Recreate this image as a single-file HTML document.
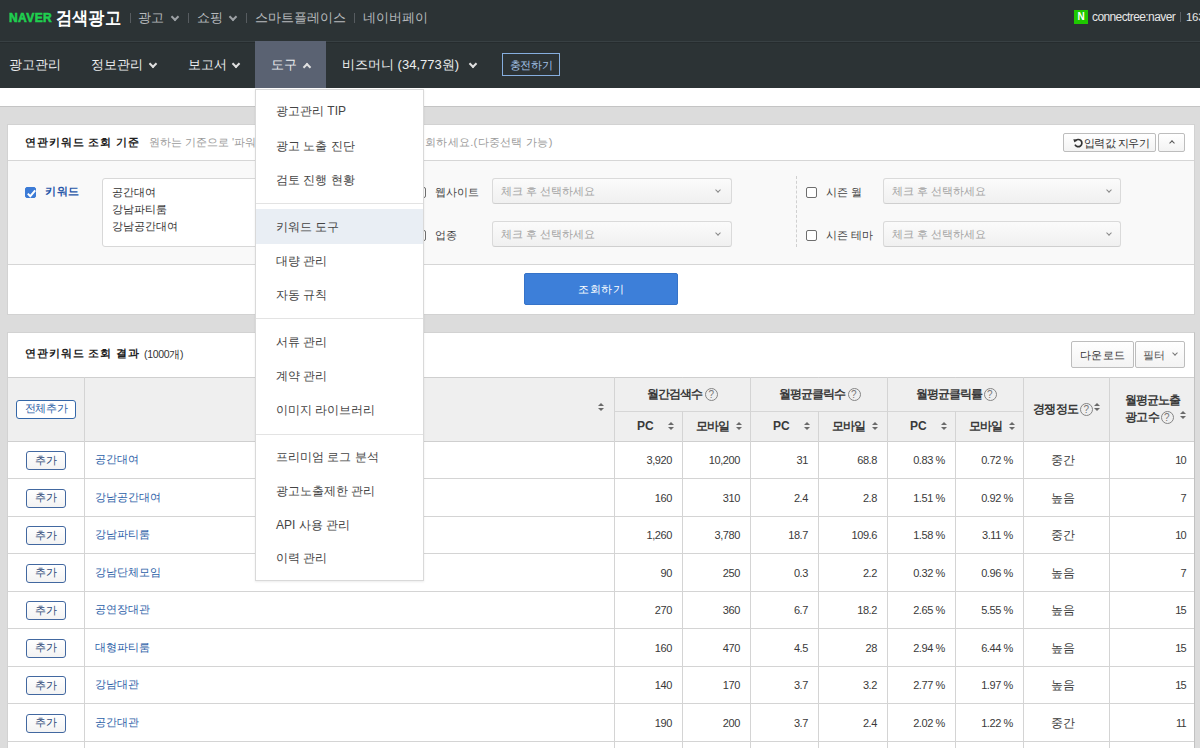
<!DOCTYPE html><html><head><meta charset="utf-8"><title>연관키워드 조회</title><style>
*{box-sizing:border-box;margin:0;padding:0}
html,body{width:1200px;height:748px;overflow:hidden;background:#fff;font-family:"Liberation Sans",sans-serif;color:#333}
div,span{position:absolute;white-space:nowrap}
.bx{position:absolute}
.chev{width:6px;height:6px;border-right:2px solid currentColor;border-bottom:2px solid currentColor;transform:rotate(45deg)}
.chevu{width:6px;height:6px;border-left:2px solid currentColor;border-top:2px solid currentColor;transform:rotate(45deg)}
.schev{width:4px;height:4px;border-right:1px solid #888;border-bottom:1px solid #888;transform:rotate(45deg)}
.t{line-height:16px;height:16px}
.sel{height:26px;border:1px solid #dadada;border-bottom-color:#cfcfcf;border-radius:3px;background:linear-gradient(#fbfbfb,#f0f0f0);}
.sel span{left:8px;top:4px;font-size:11px;color:#a3a3a3;line-height:16px;letter-spacing:0px}
.sel .schev{left:223px;top:9px}
.cb{width:11px;height:11px;border:1px solid #6e6e6e;border-radius:2px;background:#fff}
.lbl{font-size:11px;color:#444;line-height:16px;letter-spacing:0px}
.vl{width:1px;background:#d4d4d4}
.hl{height:1px;background:#d4d4d4}
.q{width:13px;height:13px;border:1.2px solid #858585;border-radius:50%;}
.q:after{content:"?";position:absolute;left:0;top:-0.5px;width:10.6px;text-align:center;font-size:10px;line-height:12px;color:#777;font-weight:normal}
.srt{width:6px;height:9px}
.srt:before{content:"";position:absolute;left:0;top:0;border-left:3px solid transparent;border-right:3px solid transparent;border-bottom:3.5px solid #6a6a6a}
.srt:after{content:"";position:absolute;left:0;top:5px;border-left:3px solid transparent;border-right:3px solid transparent;border-top:3.5px solid #6a6a6a}
.hd{font-size:12px;font-weight:bold;color:#3a3a3a;line-height:16px}
.num{font-size:11px;color:#3a3a3a;line-height:16px;text-align:right;letter-spacing:-0.4px}
.add{width:40px;height:19px;border:1px solid #4268a0;border-radius:3px;background:linear-gradient(#fff,#f3f3f3)}
.add span{left:0;width:38px;top:0px;text-align:center;font-size:11px;line-height:16px;color:#2f4a78;letter-spacing:0px}
.kw{font-size:11px;color:#2d61a8;line-height:16px;letter-spacing:0px}
.mi{left:20px;font-size:12px;color:#444;line-height:16px}
.btn{height:19px;border:1px solid #bdbdbd;border-radius:2px;background:linear-gradient(#fff,#f3f3f3)}
</style></head><body>
<div style="left:0;top:0;width:1200px;height:42px;background:#2c3335;border-bottom:1px solid #384043"></div><div style="left:0;top:42px;width:1200px;height:1px;background:#262c2e"></div>
<span style="left:9px;top:10px;font-size:12px;font-weight:bold;color:#1fcf4f;line-height:16px;letter-spacing:0.4px;-webkit-text-stroke:0.6px #1fcf4f">NAVER</span>
<span style="left:56px;top:7px;font-size:18px;font-weight:bold;color:#fff;line-height:22px;letter-spacing:0px;transform:scaleX(0.9);transform-origin:left center">검색광고</span>
<div style="left:130px;top:13px;width:1px;height:10px;background:#575c60"></div>
<div style="left:188px;top:13px;width:1px;height:10px;background:#575c60"></div>
<div style="left:246px;top:13px;width:1px;height:10px;background:#575c60"></div>
<div style="left:354px;top:13px;width:1px;height:10px;background:#575c60"></div>
<span style="left:138px;font-size:13px;color:#b7babd;line-height:16px;top:10px">광고</span><div class="chev" style="left:172px;top:14px;color:#9da1a5"></div>
<span style="left:197px;font-size:13px;color:#b7babd;line-height:16px;top:10px">쇼핑</span><div class="chev" style="left:230px;top:14px;color:#9da1a5"></div>
<span style="left:255px;font-size:13px;color:#b7babd;line-height:16px;top:10px">스마트플레이스</span>
<span style="left:363px;font-size:13px;color:#b7babd;line-height:16px;top:10px">네이버페이</span>
<div style="left:1074px;top:10px;width:14px;height:14px;background:#1ec800"><span style="left:0;top:0;width:14px;text-align:center;font-size:10px;font-weight:bold;color:#fff;line-height:14px">N</span></div>
<span style="left:1092px;top:9px;font-size:12px;color:#e6e6e6;line-height:16px;letter-spacing:-0.6px">connectree:naver</span>
<div style="left:1180px;top:12px;width:1px;height:10px;background:#5a5f64"></div>
<span style="left:1186px;top:9px;font-size:11.5px;color:#e6e6e6;line-height:16px;letter-spacing:-0.3px">163</span>
<div style="left:0;top:43px;width:1200px;height:45px;background:#2c3335"></div>
<div style="left:255px;top:41px;width:71px;height:47px;background:#5a6272"></div>
<span style="left:9px;font-size:13px;color:#eceeef;line-height:16px;top:57px;letter-spacing:0px">광고관리</span>
<span style="left:91px;font-size:13px;color:#eceeef;line-height:16px;top:57px;letter-spacing:0px">정보관리</span><div class="chev" style="left:150px;top:61px;color:#e0e0e0"></div>
<span style="left:188px;font-size:13px;color:#eceeef;line-height:16px;top:57px;letter-spacing:0px">보고서</span><div class="chev" style="left:233px;top:61px;color:#e0e0e0"></div>
<span style="left:271px;font-size:13px;color:#eceeef;line-height:16px;top:57px;letter-spacing:0px">도구</span><div class="chevu" style="left:304px;top:64px;color:#e0e0e0"></div>
<span style="left:342px;font-size:13px;color:#eceeef;line-height:16px;top:57px;letter-spacing:0px">비즈머니 (34,773원)</span><div class="chev" style="left:470px;top:61px;color:#e0e0e0"></div>
<div style="left:502px;top:53px;width:58px;height:23px;border:1px solid #86aede"><span style="left:0;top:3px;width:56px;text-align:center;font-size:10.5px;color:#a3c2e8;line-height:16px;letter-spacing:-0.4px">충전하기</span></div>
<div style="left:0;top:88px;width:1200px;height:19px;background:#fff;border-bottom:1px solid #c4c4c4"></div>
<div style="left:0;top:107px;width:1200px;height:641px;background:#dcdcdc"></div>
<div style="left:7px;top:124px;width:1188px;height:191px;background:#fff;border:1px solid #d2d2d2"></div>
<div style="left:8px;top:160px;width:1186px;height:105px;background:#f9f9f9;border-top:1px solid #d6d6d6;border-bottom:1px solid #d6d6d6"></div>
<span class="hd" style="left:25px;top:134px;font-size:11px;letter-spacing:0.9px;color:#222">연관키워드 조회 기준</span>
<div style="left:149px;top:128px;width:106px;height:28px;overflow:hidden"><span style="left:0;top:6px;font-size:11px;color:#9b9b9b;line-height:16px;letter-spacing:0px">원하는 기준으로 '파워링크 캠페인'의 키워드를 선택하고, 조</span></div>
<span style="left:425px;top:134px;font-size:11px;color:#9b9b9b;line-height:16px;letter-spacing:0.3px">회하세요.(다중선택 가능)</span>
<div class="btn" style="left:1063px;top:133px;width:93px;"><svg style="position:absolute;left:9px;top:3.5px" width="10" height="10" viewBox="0 0 10 10"><path d="M2.2 3.2 A3.6 3.6 0 1 1 2.0 6.6" fill="none" stroke="#333" stroke-width="1.7"/><path d="M0.3 1.2 L4.3 1.6 L1.4 4.6 Z" fill="#333"/></svg><span style="left:19.5px;top:1px;font-size:11px;color:#333;line-height:16px;letter-spacing:-0.5px">입력값 지우기</span></div>
<div class="btn" style="left:1158px;top:133px;width:27px;"><div class="chevu" style="left:11px;top:7px;width:4px;height:4px;border-width:1px;color:#555"></div></div>
<div class="cb" style="left:25px;top:187px;width:11px;height:11px;background:#3c7bd6;border-color:#3c7bd6"><svg style="position:absolute;left:0;top:0" width="11" height="11" viewBox="0 0 11 11"><path d="M1.8 5.6 L4.3 8.2 L9.2 2.4" fill="none" stroke="#fff" stroke-width="2"/></svg></div>
<span style="left:45px;top:183px;font-size:11px;font-weight:bold;color:#2857a8;line-height:16px;letter-spacing:0.7px">키워드</span>
<div style="left:102px;top:178px;width:300px;height:69px;background:#fff;border:1px solid #d8d8d8;border-radius:3px"></div>
<span style="left:112px;top:184px;font-size:11px;color:#333;line-height:16px;letter-spacing:0px">공간대여</span>
<span style="left:112px;top:201px;font-size:11px;color:#333;line-height:16px;letter-spacing:0px">강남파티룸</span>
<span style="left:112px;top:218px;font-size:11px;color:#333;line-height:16px;letter-spacing:0px">강남공간대여</span>
<div class="cb" style="left:415px;top:187px"></div><span class="lbl" style="left:435px;top:184px">웹사이트</span>
<div class="sel" style="left:492px;top:178px;width:240px"><span>체크 후 선택하세요</span><div class="schev"></div></div>
<div class="cb" style="left:415px;top:230px"></div><span class="lbl" style="left:435px;top:227px">업종</span>
<div class="sel" style="left:492px;top:221px;width:240px"><span>체크 후 선택하세요</span><div class="schev"></div></div>
<div style="left:796px;top:176px;width:0;height:71px;border-left:1px dashed #d0d0d0"></div>
<div class="cb" style="left:806px;top:187px"></div><span class="lbl" style="left:826px;top:184px">시즌 월</span>
<div class="sel" style="left:883px;top:178px;width:238px"><span>체크 후 선택하세요</span><div class="schev" style="left:223px"></div></div>
<div class="cb" style="left:806px;top:230px"></div><span class="lbl" style="left:826px;top:227px">시즌 테마</span>
<div class="sel" style="left:883px;top:221px;width:238px"><span>체크 후 선택하세요</span><div class="schev" style="left:223px"></div></div>
<div style="left:524px;top:273px;width:154px;height:32px;background:#3d7fd9;border-radius:2px;border:1px solid #3673c8"><span style="left:0;top:7px;width:152px;text-align:center;font-size:11px;color:#fff;line-height:16px;letter-spacing:0.5px">조회하기</span></div>
<div style="left:7px;top:332px;width:1188px;height:420px;background:#fff;border:1px solid #d2d2d2;border-right-color:#c2c2c2"></div>
<span class="hd" style="left:25px;top:345px;font-size:11px;letter-spacing:0.9px;color:#222">연관키워드 조회 결과</span>
<span style="left:144px;top:346px;font-size:10.5px;color:#333;line-height:16px;letter-spacing:-0.3px">(1000개)</span>
<div class="btn" style="left:1071px;top:341px;width:63px;height:27px"><span style="left:0;width:61px;text-align:center;top:5px;font-size:11px;color:#333;line-height:16px;letter-spacing:0.5px">다운로드</span></div>
<div class="btn" style="left:1135px;top:341px;width:50px;height:27px"><span style="left:7px;top:5px;font-size:11px;color:#555;line-height:16px;letter-spacing:0px">필터</span><div class="schev" style="left:37px;top:9px;border-color:#777"></div></div>
<div style="left:8px;top:377px;width:1186px;height:65px;background:#efefef"></div>
<div class="hl" style="left:8px;top:377px;width:1186px;background:#cfcfcf"></div>
<div class="hl" style="left:614px;top:411px;width:409px;background:#d6d6d6"></div>
<div class="hl" style="left:8px;top:441px;width:1186px;background:#cfcfcf"></div>
<div class="hl" style="left:8px;top:478px;width:1186px"></div>
<div class="hl" style="left:8px;top:516px;width:1186px"></div>
<div class="hl" style="left:8px;top:553px;width:1186px"></div>
<div class="hl" style="left:8px;top:591px;width:1186px"></div>
<div class="hl" style="left:8px;top:628px;width:1186px"></div>
<div class="hl" style="left:8px;top:666px;width:1186px"></div>
<div class="hl" style="left:8px;top:703px;width:1186px"></div>
<div class="hl" style="left:8px;top:741px;width:1186px"></div>
<div class="vl" style="left:84px;top:377px;height:380px"></div>
<div class="vl" style="left:614px;top:377px;height:380px"></div>
<div class="vl" style="left:682px;top:377px;height:380px"></div>
<div class="vl" style="left:750px;top:377px;height:380px"></div>
<div class="vl" style="left:818px;top:377px;height:380px"></div>
<div class="vl" style="left:887px;top:377px;height:380px"></div>
<div class="vl" style="left:955px;top:377px;height:380px"></div>
<div class="vl" style="left:1023px;top:377px;height:380px"></div>
<div class="vl" style="left:1109px;top:377px;height:380px"></div>
<div style="left:682px;top:378px;width:1px;height:33px;background:#efefef"></div>
<div style="left:818px;top:378px;width:1px;height:33px;background:#efefef"></div>
<div style="left:955px;top:378px;width:1px;height:33px;background:#efefef"></div>
<div class="add" style="left:16px;top:400px;width:60px;border-color:#3467a8;background:#fff"><span style="width:58px;color:#2d62a8;font-size:11px;letter-spacing:-0.3px;top:-1px">전체추가</span></div>
<div class="srt" style="left:598px;top:403px"></div>
<span class="hd" style="left:647px;top:386px;letter-spacing:-0.9px">월간검색수</span><div class="q" style="left:705px;top:388px"></div>
<span class="hd" style="left:779px;top:386px;letter-spacing:-1.1px">월평균클릭수</span><div class="q" style="left:847.5px;top:388px"></div>
<span class="hd" style="left:916px;top:386px;letter-spacing:-1.0px">월평균클릭률</span><div class="q" style="left:983.5px;top:388px"></div>
<span class="hd" style="left:637px;top:418px">PC</span><div class="srt" style="left:668px;top:422px"></div>
<span class="hd" style="left:696px;top:418px;letter-spacing:-1px">모바일</span><div class="srt" style="left:736px;top:422px"></div>
<span class="hd" style="left:773px;top:418px">PC</span><div class="srt" style="left:804px;top:422px"></div>
<span class="hd" style="left:832px;top:418px;letter-spacing:-1px">모바일</span><div class="srt" style="left:872px;top:422px"></div>
<span class="hd" style="left:910px;top:418px">PC</span><div class="srt" style="left:941px;top:422px"></div>
<span class="hd" style="left:969px;top:418px;letter-spacing:-1px">모바일</span><div class="srt" style="left:1009px;top:422px"></div>
<span class="hd" style="left:1033px;top:401px;letter-spacing:-0.6px">경쟁정도</span><div class="q" style="left:1080px;top:403px"></div><div class="srt" style="left:1094px;top:403px"></div>
<span class="hd" style="left:1125px;top:392px;letter-spacing:-1px">월평균노출</span>
<span class="hd" style="left:1125px;top:409px;letter-spacing:-0.7px">광고수</span><div class="q" style="left:1160.5px;top:411px"></div><div class="srt" style="left:1180px;top:411px"></div>
<div class="add" style="left:26px;top:451.0px"><span style="font-size:11px;letter-spacing:-0.3px;top:-0.5px">추가</span></div>
<span class="kw" style="left:95px;top:451.0px">공간대여</span>
<span class="num" style="left:612px;width:60px;top:452.0px">3,920</span>
<span class="num" style="left:680px;width:60px;top:452.0px">10,200</span>
<span class="num" style="left:748px;width:60px;top:452.0px">31</span>
<span class="num" style="left:817px;width:60px;top:452.0px">68.8</span>
<span class="num" style="left:885px;width:60px;top:452.0px">0.83 %</span>
<span class="num" style="left:953px;width:60px;top:452.0px">0.72 %</span>
<span class="num" style="left:1023px;width:80px;text-align:center;top:452.0px;letter-spacing:0px;transform:none;font-size:12px">중간</span>
<span class="num" style="left:1126px;width:60px;top:452.0px;letter-spacing:-0.7px">10</span>
<div class="add" style="left:26px;top:488.5px"><span style="font-size:11px;letter-spacing:-0.3px;top:-0.5px">추가</span></div>
<span class="kw" style="left:95px;top:488.5px">강남공간대여</span>
<span class="num" style="left:612px;width:60px;top:489.5px">160</span>
<span class="num" style="left:680px;width:60px;top:489.5px">310</span>
<span class="num" style="left:748px;width:60px;top:489.5px">2.4</span>
<span class="num" style="left:817px;width:60px;top:489.5px">2.8</span>
<span class="num" style="left:885px;width:60px;top:489.5px">1.51 %</span>
<span class="num" style="left:953px;width:60px;top:489.5px">0.92 %</span>
<span class="num" style="left:1023px;width:80px;text-align:center;top:489.5px;letter-spacing:0px;transform:none;font-size:12px">높음</span>
<span class="num" style="left:1126px;width:60px;top:489.5px;letter-spacing:-0.7px">7</span>
<div class="add" style="left:26px;top:526.0px"><span style="font-size:11px;letter-spacing:-0.3px;top:-0.5px">추가</span></div>
<span class="kw" style="left:95px;top:526.0px">강남파티룸</span>
<span class="num" style="left:612px;width:60px;top:527.0px">1,260</span>
<span class="num" style="left:680px;width:60px;top:527.0px">3,780</span>
<span class="num" style="left:748px;width:60px;top:527.0px">18.7</span>
<span class="num" style="left:817px;width:60px;top:527.0px">109.6</span>
<span class="num" style="left:885px;width:60px;top:527.0px">1.58 %</span>
<span class="num" style="left:953px;width:60px;top:527.0px">3.11 %</span>
<span class="num" style="left:1023px;width:80px;text-align:center;top:527.0px;letter-spacing:0px;transform:none;font-size:12px">중간</span>
<span class="num" style="left:1126px;width:60px;top:527.0px;letter-spacing:-0.7px">10</span>
<div class="add" style="left:26px;top:563.5px"><span style="font-size:11px;letter-spacing:-0.3px;top:-0.5px">추가</span></div>
<span class="kw" style="left:95px;top:563.5px">강남단체모임</span>
<span class="num" style="left:612px;width:60px;top:564.5px">90</span>
<span class="num" style="left:680px;width:60px;top:564.5px">250</span>
<span class="num" style="left:748px;width:60px;top:564.5px">0.3</span>
<span class="num" style="left:817px;width:60px;top:564.5px">2.2</span>
<span class="num" style="left:885px;width:60px;top:564.5px">0.32 %</span>
<span class="num" style="left:953px;width:60px;top:564.5px">0.96 %</span>
<span class="num" style="left:1023px;width:80px;text-align:center;top:564.5px;letter-spacing:0px;transform:none;font-size:12px">높음</span>
<span class="num" style="left:1126px;width:60px;top:564.5px;letter-spacing:-0.7px">7</span>
<div class="add" style="left:26px;top:601.0px"><span style="font-size:11px;letter-spacing:-0.3px;top:-0.5px">추가</span></div>
<span class="kw" style="left:95px;top:601.0px">공연장대관</span>
<span class="num" style="left:612px;width:60px;top:602.0px">270</span>
<span class="num" style="left:680px;width:60px;top:602.0px">360</span>
<span class="num" style="left:748px;width:60px;top:602.0px">6.7</span>
<span class="num" style="left:817px;width:60px;top:602.0px">18.2</span>
<span class="num" style="left:885px;width:60px;top:602.0px">2.65 %</span>
<span class="num" style="left:953px;width:60px;top:602.0px">5.55 %</span>
<span class="num" style="left:1023px;width:80px;text-align:center;top:602.0px;letter-spacing:0px;transform:none;font-size:12px">높음</span>
<span class="num" style="left:1126px;width:60px;top:602.0px;letter-spacing:-0.7px">15</span>
<div class="add" style="left:26px;top:638.5px"><span style="font-size:11px;letter-spacing:-0.3px;top:-0.5px">추가</span></div>
<span class="kw" style="left:95px;top:638.5px">대형파티룸</span>
<span class="num" style="left:612px;width:60px;top:639.5px">160</span>
<span class="num" style="left:680px;width:60px;top:639.5px">470</span>
<span class="num" style="left:748px;width:60px;top:639.5px">4.5</span>
<span class="num" style="left:817px;width:60px;top:639.5px">28</span>
<span class="num" style="left:885px;width:60px;top:639.5px">2.94 %</span>
<span class="num" style="left:953px;width:60px;top:639.5px">6.44 %</span>
<span class="num" style="left:1023px;width:80px;text-align:center;top:639.5px;letter-spacing:0px;transform:none;font-size:12px">높음</span>
<span class="num" style="left:1126px;width:60px;top:639.5px;letter-spacing:-0.7px">15</span>
<div class="add" style="left:26px;top:676.0px"><span style="font-size:11px;letter-spacing:-0.3px;top:-0.5px">추가</span></div>
<span class="kw" style="left:95px;top:676.0px">강남대관</span>
<span class="num" style="left:612px;width:60px;top:677.0px">140</span>
<span class="num" style="left:680px;width:60px;top:677.0px">170</span>
<span class="num" style="left:748px;width:60px;top:677.0px">3.7</span>
<span class="num" style="left:817px;width:60px;top:677.0px">3.2</span>
<span class="num" style="left:885px;width:60px;top:677.0px">2.77 %</span>
<span class="num" style="left:953px;width:60px;top:677.0px">1.97 %</span>
<span class="num" style="left:1023px;width:80px;text-align:center;top:677.0px;letter-spacing:0px;transform:none;font-size:12px">높음</span>
<span class="num" style="left:1126px;width:60px;top:677.0px;letter-spacing:-0.7px">15</span>
<div class="add" style="left:26px;top:713.5px"><span style="font-size:11px;letter-spacing:-0.3px;top:-0.5px">추가</span></div>
<span class="kw" style="left:95px;top:713.5px">공간대관</span>
<span class="num" style="left:612px;width:60px;top:714.5px">190</span>
<span class="num" style="left:680px;width:60px;top:714.5px">200</span>
<span class="num" style="left:748px;width:60px;top:714.5px">3.7</span>
<span class="num" style="left:817px;width:60px;top:714.5px">2.4</span>
<span class="num" style="left:885px;width:60px;top:714.5px">2.02 %</span>
<span class="num" style="left:953px;width:60px;top:714.5px">1.22 %</span>
<span class="num" style="left:1023px;width:80px;text-align:center;top:714.5px;letter-spacing:0px;transform:none;font-size:12px">중간</span>
<span class="num" style="left:1126px;width:60px;top:714.5px;letter-spacing:-0.7px">11</span>
<div style="left:255px;top:89px;width:169px;height:492px;background:#fff;border:1px solid #d9d9d9;box-shadow:0 1px 2px rgba(0,0,0,0.08)"></div>
<div style="left:256px;top:209px;width:167px;height:35px;background:#e9eef4"></div>
<div class="hl" style="left:256px;top:203px;width:167px;background:#e3e3e3"></div>
<div class="hl" style="left:256px;top:318px;width:167px;background:#e3e3e3"></div>
<div class="hl" style="left:256px;top:433.5px;width:167px;background:#e3e3e3"></div>
<span class="mi" style="left:276px;top:103px">광고관리 TIP</span>
<span class="mi" style="left:276px;top:137.5px">광고 노출 진단</span>
<span class="mi" style="left:276px;top:172px">검토 진행 현황</span>
<span class="mi" style="left:276px;top:218.5px">키워드 도구</span>
<span class="mi" style="left:276px;top:252.5px">대량 관리</span>
<span class="mi" style="left:276px;top:286.5px">자동 규칙</span>
<span class="mi" style="left:276px;top:333.5px">서류 관리</span>
<span class="mi" style="left:276px;top:367.5px">계약 관리</span>
<span class="mi" style="left:276px;top:401.5px">이미지 라이브러리</span>
<span class="mi" style="left:276px;top:448.5px">프리미엄 로그 분석</span>
<span class="mi" style="left:276px;top:483px">광고노출제한 관리</span>
<span class="mi" style="left:276px;top:517px">API 사용 관리</span>
<span class="mi" style="left:276px;top:550px">이력 관리</span>
</body></html>
